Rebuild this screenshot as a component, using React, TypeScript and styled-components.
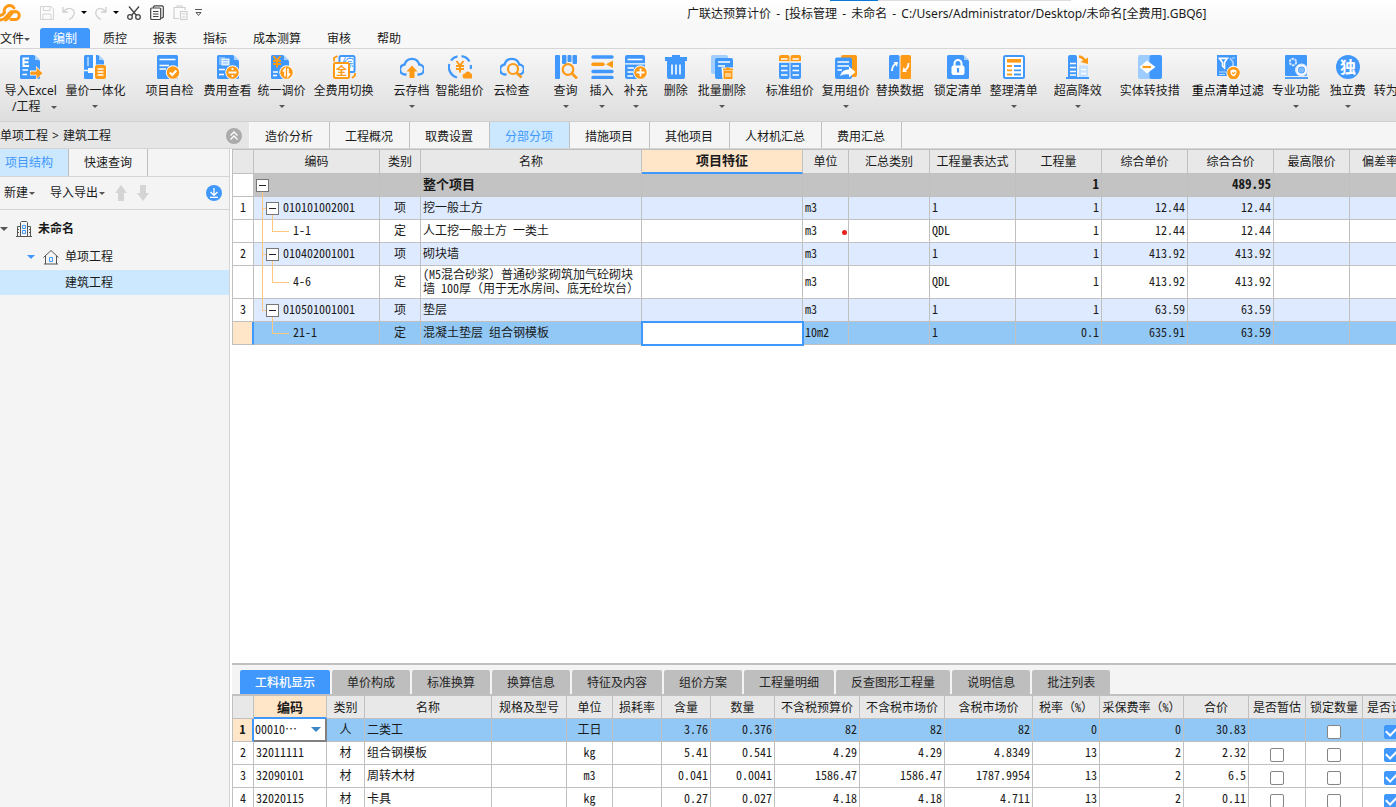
import React, { Fragment, ReactNode } from "react";
import styled, { createGlobalStyle, css } from "styled-components";

const BLUE = "#4098fc";
const ORANGE = "#ff9a17";
const PALE = "#a9d2ff";
const GRID = "#c0c0c0";
const UI = '"Noto Sans", "Noto Sans CJK SC", sans-serif';
const MONO = '"Noto Sans CJK SC", "Liberation Mono", monospace';

const Global = createGlobalStyle`
  * { box-sizing: border-box; }
  html, body { margin: 0; height: 100%; }
  #root { height: 100vh; }
  body { font: 12px/16px ${UI}; color: #1a1a1a; overflow: hidden; background: #f4f4f4; }
  button { font: inherit; color: inherit; border: 0; padding: 0; margin: 0; background: none; cursor: pointer; }
`;

/* ---------- frame ---------- */

const Window = styled.div`
  display: flex;
  flex-direction: column;
  height: 100vh;
  overflow: hidden;
`;

const TitleBar = styled.header`
  display: flex;
  align-items: center;
  height: 28px;
  flex: none;
  background: linear-gradient(#ffffff, #f7f7f7);
  white-space: nowrap;
`;

const QuickAccess = styled.div`
  display: flex;
  align-items: center;
  flex: 0 0 687px;
  height: 28px;
  padding-bottom: 3px;
`;

const QuickButton = styled.button<{ $w: number; $start?: boolean }>`
  display: flex;
  align-items: center;
  justify-content: ${(p) => (p.$start ? "flex-start" : "center")};
  width: ${(p) => p.$w}px;
  height: 20px;
  svg { flex: none; }
`;

const WindowTitle = styled.h1`
  margin: 0;
  font-size: 12px;
  font-weight: 400;
`;

const Dash = styled.span`
  margin: 0 2px;
`;

const LoadTrack = styled.div`
  position: absolute;
  top: 0;
  left: 830px;
  display: flex;
  width: 241px;
  height: 1px;
  background: #dedede;
`;

const LoadBar = styled.div`
  width: 20%;
  background: #0a78d6;
`;

const MenuBar = styled.nav`
  display: flex;
  flex: none;
  height: 21px;
  background: #f8f8f8;
  border-bottom: 1px solid #d6d6d6;
`;

const MenuButton = styled.button<{ $active?: boolean }>`
  display: flex;
  align-items: center;
  padding: 2px 13px 0;
  white-space: nowrap;
  border-radius: 3px 3px 0 0;
  ${(p) => p.$active && css`background: ${BLUE}; color: #fff;`}
`;

const FileButton = styled(MenuButton)`
  width: 40px;
  padding: 2px 0 0;
`;

const Ribbon = styled.div`
  display: flex;
  flex: none;
  align-items: flex-start;
  height: 73px;
  padding: 6px 0 0 4px;
  overflow: hidden;
  background: linear-gradient(#f7f7f7, #dedede);
  border-bottom: 1px solid #cfcfcf;
`;

const RibbonButton = styled.button<{ $gap: number; $strong?: boolean }>`
  display: flex;
  flex: none;
  flex-direction: column;
  align-items: center;
  margin-left: ${(p) => p.$gap}px;
  white-space: nowrap;
  color: ${(p) => (p.$strong ? "#000" : "#1a1a1a")};
`;

const RibbonIcon = styled.svg`
  width: 24px;
  height: 24px;
  margin-bottom: 4px;
`;

const RibbonFoot = styled.span`
  display: flex;
  align-items: center;
  justify-content: center;
  gap: 11px;
  height: 14px;
`;

const ExcelFoot = styled(RibbonFoot)`
  padding-left: 8px;
  height: 16px;
`;

const CaretSvg = styled.svg<{ $size: number }>`
  width: ${(p) => p.$size}px;
  height: ${(p) => p.$size / 2}px;
  flex: none;
`;

const Caret = ({ size = 6, color = "#555" }: { size?: number; color?: string }) => (
  <CaretSvg $size={size} viewBox="0 0 8 4" aria-hidden="true">
    <path d="M0 0h8L4 4z" fill={color} />
  </CaretSvg>
);

/* ---------- navigation row ---------- */

const NavRow = styled.div`
  display: flex;
  flex: none;
  height: 27px;
  background: #f5f5f5;
  border-bottom: 1px solid #d4d4d4;
`;

const Breadcrumb = styled.div`
  display: flex;
  align-items: center;
  gap: 4px;
  flex: 0 0 250px;
  padding: 1px 7px 0 0;
  background: #e6e6e6;
  border-right: 1px solid #fafafa;
  white-space: nowrap;
`;

const RoundButton = styled.button<{ $color: string }>`
  display: flex;
  align-items: center;
  justify-content: center;
  width: 16px;
  height: 16px;
  border-radius: 50%;
  background: ${(p) => p.$color};
`;

const PageTab = styled.button<{ $active?: boolean }>`
  flex: none;
  padding: 3px 16px 0 15px;
  border-right: 1px solid ${GRID};
  white-space: nowrap;
  ${(p) => p.$active && css`background: #cce8ff; color: ${BLUE};`}
`;

const Body = styled.div`
  display: flex;
  flex: 1;
  min-height: 0;
`;

/* ---------- project panel ---------- */

const SidePanel = styled.aside`
  flex: 0 0 230px;
  border-right: 1px solid #d4d4d4;
  background: #f4f4f4;
`;

const SideTabs = styled.div`
  display: flex;
  height: 28px;
  border-bottom: 1px solid #d4d4d4;
`;

const SideTab = styled.button<{ $active?: boolean; $lead: number }>`
  padding: 0 15px 0 ${(p) => p.$lead}px;
  border-right: 1px solid ${GRID};
  white-space: nowrap;
  ${(p) => p.$active && css`background: #cce8ff; color: ${BLUE};`}
`;

const SideTools = styled.div`
  display: flex;
  align-items: center;
  height: 33px;
  padding: 0 7px 0 4px;
  border-bottom: 1px solid #d4d4d4;
`;

const ToolButton = styled.button<{ $after: number }>`
  display: flex;
  align-items: center;
  gap: 1px;
  margin-right: ${(p) => p.$after}px;
`;

const MoveButton = styled.button`
  width: 12px;
  height: 16px;
  margin-right: 10px;
`;

const Spacer = styled.span`
  flex: 1;
`;

const Tree = styled.ul`
  list-style: none;
  margin: 0;
  padding: 4px 0 0;
`;

const TreeItem = styled.li<{ $indent: number; $height: number; $selected?: boolean; $bold?: boolean }>`
  display: flex;
  align-items: center;
  height: ${(p) => p.$height}px;
  padding-left: ${(p) => p.$indent}px;
  font-weight: ${(p) => (p.$bold ? 700 : 400)};
  background: ${(p) => (p.$selected ? "#cce8ff" : "transparent")};
`;

const TreeIcon = styled.svg`
  width: 16px;
  height: 16px;
  margin: 0 6px 0 8px;
`;

/* ---------- grids ---------- */

const Workspace = styled.main`
  display: flex;
  flex: 1;
  flex-direction: column;
  min-width: 0;
  padding-left: 2px;
  background: #fff;
`;

const GridArea = styled.div`
  min-height: 0;
  overflow: hidden;
  border-left: 1px solid ${GRID};
  font-family: ${MONO};
  font-feature-settings: "hwid";
`;

const MainArea = styled(GridArea)`
  flex: 1;
  border-left: 0;
  border-top: 1px solid ${GRID};
`;

const Grid = styled.table<{ $min: number }>`
  width: 100%;
  min-width: ${(p) => p.$min}px;
  table-layout: fixed;
  border-collapse: separate;
  border-spacing: 0;
  border-left: 1px solid ${GRID};
`;

const DetailGrid = styled(Grid)`
  border-left: 0;
`;

const Head = styled.th<{ $active?: boolean; $tall?: boolean }>`
  height: ${(p) => (p.$tall ? 24 : 23)}px;
  padding: 0 0 ${(p) => (p.$tall ? 2 : 0)}px;
  font-size: ${(p) => (p.$active ? 13 : 12)}px;
  font-weight: ${(p) => (p.$active ? 700 : 400)};
  line-height: 16px;
  white-space: nowrap;
  overflow: hidden;
  background: ${(p) => (p.$active ? "#ffe6c9" : "#e8e8e8")};
  border-right: 1px solid ${GRID};
  border-bottom: 1px solid ${GRID};
  ${(p) => p.$active && css`border-bottom: 2px solid ${BLUE};`}
`;

const rowColor = { root: "#c3c3c3", item: "#deeaff", norm: "#ffffff", picked: "#92c8f6" };
type RowKind = keyof typeof rowColor;

const Row = styled.tr<{ $kind: RowKind }>`
  background: ${(p) => rowColor[p.$kind]};
  font-weight: ${(p) => (p.$kind === "root" ? 700 : 400)};
  font-size: ${(p) => (p.$kind === "root" ? 13 : 12)}px;
`;

const Cell = styled.td<{ $align?: "left" | "center" | "right" }>`
  height: 23px;
  padding: 0 ${(p) => (p.$align ? 2 : 0)}px 2px 2px;
  text-align: ${(p) => p.$align || "left"};
  line-height: 14px;
  border-right: 1px solid ${GRID};
  border-bottom: 1px solid ${GRID};
`;

const TickCell = styled(Cell)`
  padding: 0;
  line-height: 20px;
  text-align: center;
`;

const TreeCell = styled(Cell)`
  padding: 0;
`;

const RowNo = styled.th<{ $picked?: boolean; $bold?: boolean }>`
  padding: 0 0 2px;
  font-size: 12px;
  line-height: 14px;
  font-weight: ${(p) => (p.$bold ? 700 : 400)};
  background: ${(p) => (p.$picked ? "#ffe6c9" : "#fff")};
  border-right: ${(p) => (p.$picked ? `2px solid ${BLUE}` : `1px solid ${GRID}`)};
  border-bottom: 1px solid ${GRID};
`;

const CodeLine = styled.div<{ $tall?: boolean }>`
  display: flex;
  align-items: center;
  height: ${(p) => (p.$tall ? 33 : 23)}px;
  margin-bottom: -1px;
`;

const CodeText = styled.span`
  padding-bottom: 4px;
`;

const LINE = "linear-gradient(#ffc780, #ffc780)";

const Trunk = styled.span<{ $shape: "through" | "branch" | "end" | "none" }>`
  align-self: stretch;
  width: 12px;
  background-repeat: no-repeat;
  ${(p) =>
    p.$shape === "through" &&
    css`background-image: ${LINE}; background-position: 8px 0; background-size: 1px 100%;`}
  ${(p) =>
    p.$shape === "branch" &&
    css`background-image: ${LINE}, ${LINE}; background-position: 8px 0, 8px 50%; background-size: 1px 100%, 4px 1px;`}
  ${(p) =>
    p.$shape === "end" &&
    css`background-image: ${LINE}, ${LINE}; background-position: 8px 0, 8px 50%; background-size: 1px 50%, 4px 1px;`}
`;

const Elbow = styled.span`
  align-self: stretch;
  width: 27px;
  background-image: ${LINE}, ${LINE};
  background-repeat: no-repeat;
  background-position: 6px 0, 6px 50%;
  background-size: 1px 50%, 17px 1px;
`;

const FoldHolder = styled.span<{ $root?: boolean }>`
  display: flex;
  align-items: center;
  align-self: stretch;
  margin: 0 4px 0 ${(p) => (p.$root ? 2 : 0)}px;
  background: ${LINE} no-repeat 6px 100% / 1px 50%;
`;

const FoldButton = styled.button`
  display: flex;
  align-items: center;
  justify-content: center;
  width: 13px;
  height: 13px;
  background: #fff;
  border: 1px solid #777;
  &::before {
    content: "";
    width: 7px;
    height: 1px;
    background: #222;
  }
`;

const EditCell = styled(Cell)`
  padding: 0;
  background: #fff;
  outline: 2px solid ${BLUE};
  outline-offset: -1px;
`;

const EditInput = styled.input`
  display: block;
  width: 100%;
  height: 20px;
  padding: 0 2px;
  border: 0;
  outline: 0;
  background: transparent;
  font: inherit;
`;

const UnitCell = styled.div`
  display: flex;
  align-items: center;
  justify-content: space-between;
  padding-right: 1px;
`;

const RedDot = styled.span`
  width: 5px;
  height: 5px;
  margin-top: 5px;
  border-radius: 50%;
  background: #e82020;
`;

const FullWidth = styled.span`
  font-feature-settings: "hwid" 0;
`;

/* ASCII keeps half-width cells while full-width brackets keep a whole one. */
const Label = ({ text }: { text: string }) => (
  <>
    {text.split(/([（）])/).map((part, i) =>
      /[（）]/.test(part) ? <FullWidth key={i}>{part}</FullWidth> : <Fragment key={i}>{part}</Fragment>,
    )}
  </>
);

/* ---------- detail pane ---------- */

const DetailPane = styled.section`
  flex: none;
  height: 144px;
  overflow: hidden;
  border-top: 2px solid ${GRID};
  background: #f4f4f4;
`;

const DetailTabs = styled.div`
  display: flex;
  gap: 2px;
  height: 31px;
  padding: 5px 0 0 8px;
  border-bottom: 2px solid ${GRID};
`;

const DetailTab = styled.button<{ $active?: boolean }>`
  flex: none;
  padding: 2px 15px 0;
  white-space: nowrap;
  border-radius: 2px 2px 0 0;
  color: ${(p) => (p.$active ? "#fff" : "#262626")};
  font-weight: ${(p) => (p.$active ? 500 : 400)};
  background: ${(p) => (p.$active ? BLUE : "#bebebe")};
`;

const PickCell = styled(Cell)`
  padding: 0;
  background: #fff;
  border-right: 2px solid #808080;
  border-bottom: 2px solid #808080;
`;

const PickBox = styled.div`
  position: relative;
  display: flex;
  align-items: center;
  svg { position: absolute; right: 4px; pointer-events: none; }
`;

const PickSelect = styled.select`
  appearance: none;
  width: 100%;
  height: 20px;
  padding: 0 1px 1px;
  border: 0;
  outline: 0;
  background: transparent;
  color: inherit;
  font: inherit;
  font-feature-settings: "hwid";
`;

const Tick = styled.input`
  appearance: none;
  display: inline-grid;
  place-content: center;
  width: 14px;
  height: 14px;
  margin: 0;
  vertical-align: middle;
  border: 1px solid #858585;
  border-radius: 2px;
  background: #fff;
  &:checked { background: ${BLUE}; border-color: ${BLUE}; }
  &:checked::before {
    content: "";
    width: 9px;
    height: 5px;
    margin-bottom: 3px;
    border: solid #fff;
    border-width: 0 0 2px 2px;
    transform: rotate(-45deg);
  }
`;

/* ---------- ribbon drawings ---------- */

const Lines = ({ d, c = "#fff", w = 2 }: { d: string; c?: string; w?: number }) => (
  <path d={d} fill="none" stroke={c} strokeWidth={w} />
);
const Doc = ({ x = 1, w = 20 }: { x?: number; w?: number }) => (
  <>
    <path d={`M${x + 1.5} 0h${w - 7.5}l6 6v16.5q0 1.500-1.500 1.500H${x + 1.5}q-1.500 0-1.500-1.500V1.500Q${x} 0 ${x + 1.5} 0z`} fill={BLUE} />
    <path d={`M${x + w - 5} 0l5 5h-5z`} fill={PALE} />
  </>
);
const Badge = ({ x = 16.5, y = 17.5, children }: { x?: number; y?: number; children: ReactNode }) => (
  <>
    <circle cx={x} cy={y} r="7.200" fill="#fff" />
    <circle cx={x} cy={y} r="6.300" fill={ORANGE} />
    {children}
  </>
);
const Cloud = () => (
  <path
    d="M6.500 19.500H5.500A4.600 4.600 0 0 1 4.600 9.500 7.600 7.600 0 0 1 19.300 9.500 4.700 4.700 0 0 1 18.500 19.500H17.500"
    fill="none"
    stroke={BLUE}
    strokeWidth="2.400"
  />
);
const Yen = ({ x, y }: { x: number; y: number }) => (
  <path
    transform={`translate(${x} ${y})`}
    d="M1 0l3.500 4.500L8 0M.5 5h8M.5 8h8M4.500 4.500V11.500"
    fill="none"
    stroke={ORANGE}
    strokeWidth="2"
  />
);

const icons: Record<string, ReactNode> = {
  excel: (
    <>
      <Doc />
      <Lines d="M10 3.500H4.500V11H10M4.500 7.200H9.500" w={2} />
      <Lines d="M3.500 15H9M3.500 19.500H8" w={1.500} />
      <path d="M11 15.500h6v-4.500l7 7-7 7v-4.500h-6z" fill="#fff" />
      <path d="M12 16.500h5.500v-4l6 5.700-6 5.600v-4H12q-1.800-1.500 0-3.300z" fill={ORANGE} />
    </>
  ),
  unify: (
    <>
      <path d="M1 1.500Q1 0 2.500 0H10v24H2.500Q1 24 1 22.500z" fill={BLUE} />
      <path d="M13 0h2l6 6v4h-8z" fill={BLUE} />
      <path d="M16 0l5 5h-5z" fill={PALE} />
      <path d="M5 2v9M11 0v24" stroke="#fff" strokeWidth="1" />
      <path d="M1 15.500h11" stroke="#fff" strokeWidth="1.500" />
      <rect x="5" y="13" width="5" height="5" fill="#fff" />
      <rect x="11.500" y="9.500" width="12" height="15" rx="2.500" fill="#fff" />
      <rect x="12" y="10" width="11" height="14" rx="2" fill={ORANGE} />
      <Lines d="M14.500 14h6M14.500 17h6M14.500 20h6" w={1.400} />
    </>
  ),
  check: (
    <>
      <rect x="0" width="21" height="24" rx="1.500" fill={BLUE} />
      <Lines d="M2.500 4.500H18.500M2.500 10.500H12M2.500 14H9" w={1.500} />
      <Badge x={16}><Lines d="M12.800 17.500l2.500 2.500 4-4.500" /></Badge>
    </>
  ),
  view: (
    <>
      <Doc w={22} />
      <path d="M3 2h6v8H3z" fill="#7fbcff" />
      <path d="M5.500 3.500h8v7h-8z" fill="#e2f0ff" />
      <path d="M7 5.500h5M7 8h5" stroke="#8cc2ff" />
      <Lines d="M3 14.500H9M3 19.500H8" w={1.600} />
      <Badge><Lines d="M12.500 17.500h8M16.500 13v2M16.500 20v2" w={1.800} /></Badge>
    </>
  ),
  adjust: (
    <>
      <Doc w={18} />
      <Yen x={2.5} y={1} />
      <Lines d="M3 17H8M3 20.500H7" w={1.400} />
      <Badge><Lines d="M15 21.500v-7.500l-2 2.500M18 13.500V21l2-2.500" w={1.600} /></Badge>
    </>
  ),
  swap: (
    <>
      <rect x="7.500" y="1" width="15" height="16" rx="1.500" fill="#fff" stroke={BLUE} strokeWidth="2" />
      <text x="10.500" y="12" fontSize="11" fill={BLUE} fontFamily={UI}>综</text>
      <rect x="2" y="8" width="15" height="15" rx="1.500" fill="#fff" stroke={ORANGE} strokeWidth="2" />
      <text x="4" y="20" fontSize="11" fontWeight="700" fill={ORANGE} fontFamily={UI}>全</text>
      <Lines c={ORANGE} d="M2 6.500V3l3.500-2M20 23l3-2.500V18" w={1.800} />
    </>
  ),
  cloudUp: (
    <>
      <Cloud />
      <path d="M12 10.500l5.500 6h-3V23h-5v-6.500h-3z" fill={ORANGE} />
    </>
  ),
  smart: (
    <>
      <path d="M9 22.500A10.800 10.800 0 0 1 1.300 9M3 5.500A10.800 10.800 0 0 1 9.500 1.400M13.500 1.200A10.800 10.800 0 0 1 21.500 6.500M22.700 10a10.800 10.800 0 0 1 0 4" fill="none" stroke={BLUE} strokeWidth="2.200" />
      <Yen x={7.5} y={6} />
      <path d="M17 23.500a2.500 2.500 0 0 1 0-5 3 3 0 0 1 5.700 0 2.500 2.500 0 0 1 0 5z" fill={ORANGE} />
    </>
  ),
  cloudFind: (
    <>
      <Cloud />
      <circle cx="13" cy="14" r="5" fill="#f0f0f0" stroke={ORANGE} strokeWidth="2.200" />
      <Lines c={ORANGE} d="M16.500 17.500l5 5" w={2.600} />
    </>
  ),
  query: (
    <>
      <rect x="1" width="5" height="24" rx="1" fill={BLUE} />
      <rect x="8" width="4.500" height="9" rx="1" fill={BLUE} />
      <rect x="13.500" width="4" height="7" rx="1" fill={BLUE} />
      <rect x="18.500" width="4.500" height="9" rx="1" fill={BLUE} />
      <circle cx="14" cy="14.500" r="5.300" fill="none" stroke={ORANGE} strokeWidth="2.200" />
      <Lines c={ORANGE} d="M18 18.500l5 5" w={2.600} />
    </>
  ),
  insert: (
    <>
      <path d="M3 2H22M3 16.500H22M3 22.500H22" stroke={BLUE} strokeWidth="3.400" strokeLinecap="round" />
      <path d="M3 9.200H13" stroke={ORANGE} strokeWidth="3.400" strokeLinecap="round" />
      <path d="M16 9.200L23 5.500v7.400z" fill={ORANGE} />
    </>
  ),
  supply: (
    <>
      <rect x="1" width="20" height="24" rx="2" fill={BLUE} />
      <Lines d="M3.500 4.500H18.500M1 8.800H21M3.500 13H10M3.500 17H9M3.500 21H9" w={1.300} />
      <Badge><Lines d="M12.500 17.500h8M16.500 13.500v8" w={1.800} /></Badge>
    </>
  ),
  trash: (
    <>
      <path d="M1 3h7V0h8v3h7v3H1zM3 7h18v15q0 2-2 2H5q-2 0-2-2z" fill={BLUE} />
      <path d="M1 2h22v3.500H1zM3 5h18v4H3z" fill={BLUE} />
      <Lines d="M8 9.500v10M12 9.500v10M16 9.500v10" w={1.600} />
    </>
  ),
  batch: (
    <>
      <rect x="1" width="17" height="19" rx="2" fill="#a3cfff" />
      <rect x="5" y="3" width="18" height="21" rx="2" fill={BLUE} />
      <Lines d="M8 7H20M8 11H15" w={1.300} />
      <path d="M11.500 12.500h11.500V24H12.500z" fill="#fff" />
      <path d="M13 13.500h3v-1h3.500v1H23v2H13zM13.500 16h9V24h-9z" fill={ORANGE} />
      <Lines d="M16 18v4M18 18v4M20 18v4" w={1} />
    </>
  ),
  standard: (
    <>
      {[1, 12.5].map((x) => (
        <g key={x}>
          <path d={`M${x} 2q0-2 2-2h6.500q2 0 2 2v5H${x}z`} fill={ORANGE} />
          <path d={`M${x} 7h10.500v15q0 2-2 2H${x + 2}q-2 0-2-2z`} fill={BLUE} />
          <Lines d={`M${x + 2} 4h6.500M${x} 7h10.500M${x + 2} 11h6.500M${x + 2} 15.500h6.500M${x + 2} 20h6.500`} w={1.400} />
        </g>
      ))}
    </>
  ),
  reuse: (
    <>
      <rect x="7" width="16" height="22" rx="2" fill={ORANGE} />
      <rect x="1" y="2.500" width="17" height="21.500" rx="2" fill={BLUE} />
      <Lines d="M3.500 7H15M3.500 11H15M3.500 15H8" w={1.400} />
      <path d="M6 21q2-7 9-6.500V11.500l6.500 5.500-6.500 5.500v-3Q9.500 18.500 6 21z" fill="#fff" />
    </>
  ),
  replace: (
    <>
      <rect x="1" width="10.500" height="24" rx="1.500" fill={BLUE} />
      <rect x="12.500" width="10.500" height="24" rx="1.500" fill={ORANGE} />
      <Lines d="M4 16q0-5 3.500-7" w={1.800} />
      <path d="M5.500 7h4.500l-1 5z" fill="#fff" />
      <Lines d="M20.500 8q0 5-3.500 7" w={1.800} />
      <path d="M19 17h-4.500l1-5z" fill="#fff" />
    </>
  ),
  lock: (
    <>
      <Doc w={22} />
      <rect x="5.500" y="10.500" width="13" height="9.500" rx="2" fill="#fff" />
      <Lines d="M8.500 11V8.500a3.500 3.500 0 0 1 7 0V11" w={2} />
      <Lines c={BLUE} d="M12 13v4.500" w={2.200} />
    </>
  ),
  arrange: (
    <>
      <rect x="2" y="1" width="20" height="22" rx="1.500" fill="#fff" stroke={BLUE} strokeWidth="2" />
      <path d="M5 5.800H19" stroke={ORANGE} strokeWidth="3.600" />
      <path d="M5 11h5M5 15.300h5M5 19.500h5" stroke={ORANGE} strokeWidth="1.800" />
      <path d="M12 11h7M12 15.300h7M12 19.500h7" stroke={BLUE} strokeWidth="1.800" />
    </>
  ),
  tall: (
    <>
      <path d="M2 2q0-2 2-2h5q2 0 2 2v20H2z" fill={BLUE} />
      <Lines d="M4 8.500h6M4 12.500h6M4 16.500h6M4 20h6" w={1.300} />
      <rect x="13" y="10.500" width="9" height="11.500" rx="1" fill="#c6e2ff" />
      <path d="M15 14.500h5M15 18.500h5" stroke="#fff" strokeWidth="1.300" />
      <path d="M0 23H23" stroke={BLUE} strokeWidth="2" />
      <Lines c={ORANGE} d="M13 1.500q4 .5 5.500 4" w={2.400} />
      <path d="M14.500 7L22 2.500V9z" fill={ORANGE} />
    </>
  ),
  convert: (
    <>
      <rect width="13" height="24" rx="2" fill="#9dccff" />
      <rect x="11.500" width="12.500" height="24" rx="2" fill={BLUE} />
      <path d="M9 5.500l8.500 6.500L9 18.500 1.500 12z" fill="#fff" />
      <Lines c={ORANGE} d="M4.500 12H13" w={2.200} />
    </>
  ),
  filter: (
    <>
      <path d="M1 0h20v21H1z" fill={BLUE} />
      <path d="M3 3h10M16 3h3" stroke="#bcdcff" />
      <Lines d="M3.500 3.500H11L8.500 7.500V13L6.500 11V7.500z" w={1.600} />
      <path d="M14 3l3 4v4" fill="none" stroke="#a9d2ff" strokeWidth="1.600" />
      <path d="M3 17h7M3 19.500h6" stroke="#bcdcff" />
      <Badge x={17.5} y={18}>
        <path d="M14.500 15.500l3-1 3 1v2.500q-.5 2.500-3 3.500-2.500-1-3-3.500z" fill="#fff" />
        <Lines c={ORANGE} d="M16 17.500l1.300 1.300 2-2" w={1.200} />
      </Badge>
    </>
  ),
  pro: (
    <>
      <rect x="1" width="22" height="21" rx="1" fill={BLUE} />
      <path d="M1 23H24" stroke={BLUE} strokeWidth="1.800" />
      <circle cx="9" cy="7" r="3.200" fill="none" stroke="#cfe5ff" strokeWidth="2" strokeDasharray="2.600 .7" />
      <circle cx="17.500" cy="15" r="6.500" fill="#d9eaff" />
      <circle cx="17.500" cy="15" r="4.200" fill={BLUE} stroke="#fff" strokeWidth="1.500" />
      <circle cx="17.500" cy="15" r="2.700" fill="#7db9ff" />
    </>
  ),
  single: (
    <>
      <circle cx="12" cy="12" r="12" fill={BLUE} />
      <text x="12" y="17.500" fontSize="16" fontWeight="700" textAnchor="middle" fill="#fff" fontFamily={UI}>独</text>
    </>
  ),
};

type Tool = [icon: string, label: string, gap: number, menu?: boolean];
const tools: Tool[] = [
  ["excel", "导入Excel", 0],
  ["unify", "量价一体化", 8, true],
  ["check", "项目自检", 20],
  ["view", "费用查看", 10],
  ["adjust", "统一调价", 6, true],
  ["swap", "全费用切换", 8],
  ["cloudUp", "云存档", 20, true],
  ["smart", "智能组价", 6],
  ["cloudFind", "云检查", 10],
  ["query", "查询", 24, true],
  ["insert", "插入", 12, true],
  ["supply", "补充", 10, true],
  ["trash", "删除", 16],
  ["batch", "批量删除", 10, true],
  ["standard", "标准组价", 20],
  ["reuse", "复用组价", 8, true],
  ["replace", "替换数据", 6],
  ["lock", "锁定清单", 10],
  ["arrange", "整理清单", 8, true],
  ["tall", "超高降效", 16, true],
  ["convert", "实体转技措", 18],
  ["filter", "重点清单过滤", 12],
  ["pro", "专业功能", 8, true],
  ["single", "独立费", 10, true],
  ["", "转为", 8],
];

/* ---------- data ---------- */

const mainWidths = [21, 126, 41, 221, 161, 46, 81, 86, 86, 86, 86, 76];
const mainHeads = ["", "编码", "类别", "名称", "项目特征", "单位", "汇总类别", "工程量表达式", "工程量", "综合单价", "综合合价", "最高限价", "偏差率"];

interface Item {
  no?: string;
  kind: RowKind;
  leaf?: boolean;
  trunk?: "through" | "branch" | "end" | "none";
  code?: string;
  type?: string;
  name: string;
  unit?: string;
  expr?: string;
  qty: string;
  price?: string;
  total: string;
  tall?: boolean;
  dot?: boolean;
}
const items: Item[] = [
  { kind: "root", name: "整个项目", qty: "1", total: "489.95" },
  { no: "1", kind: "item", trunk: "branch", code: "010101002001", type: "项", name: "挖一般土方", unit: "m3", expr: "1", qty: "1", price: "12.44", total: "12.44" },
  { kind: "norm", leaf: true, trunk: "through", code: "1-1", type: "定", name: "人工挖一般土方 一类土", unit: "m3", expr: "QDL", qty: "1", price: "12.44", total: "12.44", dot: true },
  { no: "2", kind: "item", trunk: "branch", code: "010402001001", type: "项", name: "砌块墙", unit: "m3", expr: "1", qty: "1", price: "413.92", total: "413.92" },
  { kind: "norm", leaf: true, trunk: "through", code: "4-6", type: "定", name: "(M5混合砂浆）普通砂浆砌筑加气砼砌块墙 100厚（用于无水房间、底无砼坎台）", unit: "m3", expr: "QDL", qty: "1", price: "413.92", total: "413.92", tall: true },
  { no: "3", kind: "item", trunk: "end", code: "010501001001", type: "项", name: "垫层", unit: "m3", expr: "1", qty: "1", price: "63.59", total: "63.59" },
  { kind: "picked", leaf: true, trunk: "none", code: "21-1", type: "定", name: "混凝土垫层 组合钢模板", unit: "10m2", expr: "1", qty: "0.1", price: "635.91", total: "63.59" },
];

const detailWidths = [21, 73, 38, 127, 75, 46, 49, 49, 64, 85, 85, 88, 67, 84, 65, 57, 57];
const detailHeads = ["", "编码", "类别", "名称", "规格及型号", "单位", "损耗率", "含量", "数量", "不含税预算价", "不含税市场价", "含税市场价", "税率（%）", "采保费率（%）", "合价", "是否暂估", "锁定数量", "是否计价"];
const details = [
  ["00010…", "人", "二类工", "工日", "3.76", "0.376", "82", "82", "82", "0", "0", "30.83"],
  ["32011111", "材", "组合钢模板", "kg", "5.41", "0.541", "4.29", "4.29", "4.8349", "13", "2", "2.32"],
  ["32090101", "材", "周转木材", "m3", "0.041", "0.0041", "1586.47", "1586.47", "1787.9954", "13", "2", "6.5"],
  ["32020115", "材", "卡具", "kg", "0.27", "0.027", "4.18", "4.18", "4.711", "13", "2", "0.11"],
];

const pageTabs = ["造价分析", "工程概况", "取费设置", "分部分项", "措施项目", "其他项目", "人材机汇总", "费用汇总"];
const detailTabs = ["工料机显示", "单价构成", "标准换算", "换算信息", "特征及内容", "组价方案", "工程量明细", "反查图形工程量", "说明信息", "批注列表"];

const Columns = ({ widths }: { widths: number[] }) => (
  <colgroup>
    {widths.map((w, i) => (
      <col key={i} width={w} />
    ))}
    <col />
  </colgroup>
);

const QuickTools = () => (
  <QuickAccess>
    <QuickButton $w={32} $start aria-label="主菜单">
      <svg width="22" height="20" viewBox="0 0 22 20">
        <path d="M0 17Q4 17 6.500 13.500T11.500 8.500M0 12.500Q3 12 4.500 9.500A5.300 5.300 0 0 1 14 5M11 16.500h4A4 4 0 0 0 15.500 8.500Q12 8.500 10.500 12T5.500 17" fill="none" stroke={ORANGE} strokeWidth="3" strokeLinecap="round" />
      </svg>
    </QuickButton>
    <QuickButton $w={30} aria-label="保存">
      <svg width="14" height="14" viewBox="0 0 14 14" fill="none" stroke="#d4d4d4">
        <path d="M.5 .5H11L13.500 3V13.500H.5zM3.500 .5V4.500H10V.5M3 13V8h8v5" />
      </svg>
    </QuickButton>
    <QuickButton $w={14} aria-label="撤销">
      <svg width="14" height="14" viewBox="0 0 14 14" fill="none" stroke="#d0d0d0" strokeWidth="1.300">
        <path d="M1 1V6H6M1.500 5.500Q5 1.500 8.500 2.500 13 4 12 8.500 11 11.500 7 13.500" />
      </svg>
    </QuickButton>
    <QuickButton $w={16} aria-label="撤销列表"><Caret color="#000" /></QuickButton>
    <QuickButton $w={20} aria-label="重做">
      <svg width="14" height="14" viewBox="0 0 14 14" fill="none" stroke="#d0d0d0" strokeWidth="1.300">
        <path d="M11 1V6H6M10.500 5.500Q7 1.500 4 2.500 0 4 1 8.500 2 11.500 6 13.500" />
      </svg>
    </QuickButton>
    <QuickButton $w={8} aria-label="重做列表"><Caret color="#000" /></QuickButton>
    <QuickButton $w={28} aria-label="剪切">
      <svg width="14" height="14" viewBox="0 0 14 14" fill="none" stroke="#444" strokeWidth="1.300">
        <circle cx="3" cy="11" r="2.300" />
        <circle cx="11" cy="11" r="2.300" />
        <path d="M2 .5L9.500 9.500M12 .5L4.500 9.500" />
      </svg>
    </QuickButton>
    <QuickButton $w={18} aria-label="复制">
      <svg width="14" height="16" viewBox="0 0 14 16" fill="none" stroke="#444" strokeWidth="1.200">
        <path d="M3.500 3V1.700L4.500 .8H12.300L13.300 1.800V12L12.300 13H11" />
        <rect x=".7" y="3" width="10" height="11.500" rx="1" />
        <path d="M3 6.500h5.500M3 9h5.500M3 11.500h5.500" />
      </svg>
    </QuickButton>
    <QuickButton $w={28} aria-label="粘贴">
      <svg width="15" height="16" viewBox="0 0 15 16" fill="none" stroke="#d0d0d0" strokeWidth="1.200">
        <path d="M6 13.500H1V2.500H12V5M4 2.500V1h5v1.500" />
        <rect x="7.500" y="6.500" width="6.500" height="8" />
        <path d="M9 9h3.500M9 12h3.500" />
      </svg>
    </QuickButton>
    <QuickButton $w={8} aria-label="自定义">
      <svg width="7" height="8" viewBox="0 0 7 8" fill="none" stroke="#555">
        <path d="M0 .5H7M1 3.500H6L3.500 6.500z" />
      </svg>
    </QuickButton>
  </QuickAccess>
);

const CodeContent = ({ item }: { item: Item }) => {
  if (item.kind === "root")
    return (
      <CodeLine>
        <FoldHolder $root><FoldButton aria-label="折叠" /></FoldHolder>
      </CodeLine>
    );
  return (
    <CodeLine $tall={item.tall}>
      <Trunk $shape={item.trunk || "none"} />
      {item.leaf ? <Elbow /> : <FoldHolder><FoldButton aria-label="折叠" /></FoldHolder>}
      <CodeText>{item.code}</CodeText>
    </CodeLine>
  );
};

export default function App() {
  return (
    <Window>
      <Global />
      <TitleBar>
        <QuickTools />
        <WindowTitle>
          广联达预算计价 <Dash>-</Dash> [投标管理 <Dash>-</Dash> 未命名 <Dash>-</Dash> C:/Users/Administrator/Desktop/未命名[全费用].GBQ6]
        </WindowTitle>
        <LoadTrack><LoadBar /></LoadTrack>
      </TitleBar>

      <MenuBar>
        <FileButton>文件<Caret /></FileButton>
        {["编制", "质控", "报表", "指标", "成本测算", "审核", "帮助"].map((m, i) => (
          <MenuButton key={m} $active={i === 0}>{m}</MenuButton>
        ))}
      </MenuBar>

      <Ribbon>
        {tools.map(([icon, label, gap, menu]) => (
          <RibbonButton key={label} $gap={gap} $strong={icon === "filter"}>
            <RibbonIcon viewBox="0 0 24 24" aria-hidden="true">{icons[icon]}</RibbonIcon>
            {label}
            {icon === "excel" && <ExcelFoot>/工程<Caret /></ExcelFoot>}
            {menu && <RibbonFoot><Caret /></RibbonFoot>}
          </RibbonButton>
        ))}
      </Ribbon>

      <NavRow>
        <Breadcrumb>
          <span>单项工程</span>
          <span>&gt;</span>
          <span>建筑工程</span>
          <Spacer />
          <RoundButton $color="#ababab" aria-label="收起">
            <svg width="8" height="9" viewBox="0 0 8 9" fill="none" stroke="#fff" strokeWidth="1.300">
              <path d="M.5 4.500L4 1 7.500 4.500M.5 8.500L4 5 7.500 8.500" />
            </svg>
          </RoundButton>
        </Breadcrumb>
        {pageTabs.map((t) => (
          <PageTab key={t} $active={t === "分部分项"}>{t}</PageTab>
        ))}
      </NavRow>

      <Body>
        <SidePanel>
          <SideTabs>
            <SideTab $active $lead={5}>项目结构</SideTab>
            <SideTab $lead={15}>快速查询</SideTab>
          </SideTabs>
          <SideTools>
            <ToolButton $after={15}>新建<Caret /></ToolButton>
            <ToolButton $after={10}>导入导出<Caret /></ToolButton>
            <MoveButton aria-label="上移">
              <svg width="12" height="16" viewBox="0 0 12 16"><path d="M6 0l6 8H9v8H3V8H0z" fill="#d4d4d4" /></svg>
            </MoveButton>
            <MoveButton aria-label="下移">
              <svg width="12" height="16" viewBox="0 0 12 16"><path d="M6 16l6-8H9V0H3v8H0z" fill="#d4d4d4" /></svg>
            </MoveButton>
            <Spacer />
            <RoundButton $color={BLUE} aria-label="下载">
              <svg width="10" height="10" viewBox="0 0 10 10" fill="none" stroke="#fff" strokeWidth="1.300">
                <path d="M5 0V7M1.500 4L5 7.300 8.500 4M1 9.300H9" />
              </svg>
            </RoundButton>
          </SideTools>
          <Tree>
            <TreeItem $indent={0} $height={30} $bold>
              <Caret size={8} />
              <TreeIcon viewBox="0 0 16 16" fill="none" stroke="#555">
                <path d="M0 15.500H16M4.500 15V1.500L5.500 .5H10.500L11.500 1.500V15M4 5.500H1.500V15M12 5.500H14.500V15M2 8.500h1M2 11.500h1M13 8.500h1M13 11.500h1" />
                <path d="M6.500 4.500h3v3h-3zM6.500 9.500h3v3h-3z" stroke={BLUE} />
              </TreeIcon>
              未命名
            </TreeItem>
            <TreeItem $indent={27} $height={26}>
              <Caret size={8} color={BLUE} />
              <TreeIcon viewBox="0 0 16 16" fill="none" stroke="#555">
                <path d="M.5 8.500L8 1.500 15.500 8.500M2.500 7V15M13.500 7V15M1 15H15" />
                <path d="M6.500 8.500h3v4h-3z" stroke={BLUE} />
              </TreeIcon>
              单项工程
            </TreeItem>
            <TreeItem $indent={65} $height={25} $selected>建筑工程</TreeItem>
          </Tree>
        </SidePanel>

        <Workspace>
          <MainArea>
            <Grid $min={1179}>
              <Columns widths={mainWidths} />
              <thead>
                <tr>
                  {mainHeads.map((h, i) => (
                    <Head key={i} scope="col" $tall $active={h === "项目特征"}>{h}</Head>
                  ))}
                </tr>
              </thead>
              <tbody>
                {items.map((r, i) => (
                  <Row key={i} $kind={r.kind}>
                    <RowNo scope="row" $picked={r.kind === "picked"}>{r.no}</RowNo>
                    <TreeCell><CodeContent item={r} /></TreeCell>
                    <Cell $align="center">{r.type}</Cell>
                    <Cell><Label text={r.name} /></Cell>
                    {r.kind === "picked" ? (
                      <EditCell><EditInput aria-label="项目特征" /></EditCell>
                    ) : (
                      <Cell />
                    )}
                    <Cell>
                      <UnitCell>{r.unit}{r.dot && <RedDot />}</UnitCell>
                    </Cell>
                    <Cell />
                    <Cell>{r.expr}</Cell>
                    <Cell $align="right">{r.qty}</Cell>
                    <Cell $align="right">{r.price}</Cell>
                    <Cell $align="right">{r.total}</Cell>
                    <Cell />
                    <Cell />
                  </Row>
                ))}
              </tbody>
            </Grid>
          </MainArea>

          <DetailPane>
            <DetailTabs>
              {detailTabs.map((t, i) => (
                <DetailTab key={t} $active={i === 0}>{t}</DetailTab>
              ))}
            </DetailTabs>
            <GridArea>
              <DetailGrid $min={1187}>
                <Columns widths={detailWidths} />
                <thead>
                  <tr>
                    {detailHeads.map((h, i) => (
                      <Head key={i} scope="col" $active={h === "编码"}><Label text={h} /></Head>
                    ))}
                  </tr>
                </thead>
                <tbody>
                  {details.map((d, i) => (
                    <Row key={i} $kind={i === 0 ? "picked" : "norm"}>
                      <RowNo scope="row" $picked={i === 0} $bold={i === 0}>{i + 1}</RowNo>
                      {i === 0 ? (
                        <PickCell>
                          <PickBox>
                            <PickSelect aria-label="编码"><option>{d[0]}</option></PickSelect>
                            <Caret size={10} color="#3b86c4" />
                          </PickBox>
                        </PickCell>
                      ) : (
                        <Cell>{d[0]}</Cell>
                      )}
                      <Cell $align="center">{d[1]}</Cell>
                      <Cell>{d[2]}</Cell>
                      <Cell />
                      <Cell $align="center">{d[3]}</Cell>
                      <Cell />
                      {d.slice(4).map((v, j) => (
                        <Cell key={j} $align="right">{v}</Cell>
                      ))}
                      <TickCell>{i > 0 && <Tick type="checkbox" aria-label="是否暂估" />}</TickCell>
                      <TickCell><Tick type="checkbox" aria-label="锁定数量" /></TickCell>
                      <TickCell><Tick type="checkbox" defaultChecked aria-label="是否计价" /></TickCell>
                    </Row>
                  ))}
                </tbody>
              </DetailGrid>
            </GridArea>
          </DetailPane>
        </Workspace>
      </Body>
    </Window>
  );
}
